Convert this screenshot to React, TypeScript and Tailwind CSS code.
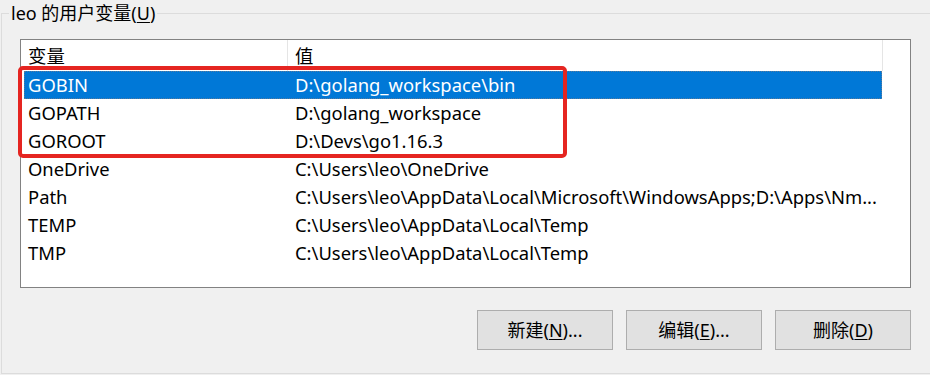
const rows = [
  { name: "GOBIN", value: "D:\\golang_workspace\\bin" },
  { name: "GOPATH", value: "D:\\golang_workspace" },
  { name: "GOROOT", value: "D:\\Devs\\go1.16.3" },
  { name: "OneDrive", value: "C:\\Users\\leo\\OneDrive" },
  { name: "Path", value: "C:\\Users\\leo\\AppData\\Local\\Microsoft\\WindowsApps;D:\\Apps\\Nm..." },
  { name: "TEMP", value: "C:\\Users\\leo\\AppData\\Local\\Temp" },
  { name: "TMP", value: "C:\\Users\\leo\\AppData\\Local\\Temp" },
];

function Btn({ label, hot, rest }: { label: string; hot: string; rest: string }) {
  return (
    <button className="w-[136px] h-[40px] border border-[#adadad] bg-[#e1e1e1] text-[18px] text-black flex items-center justify-center">
      {label}(<span className="underline underline-offset-2">{hot}</span>){rest}
    </button>
  );
}

export default function App() {
  return (
    <div
      className="w-[930px] h-[375px] bg-[#f0f0f0] overflow-hidden relative text-black"
      style={{ fontFamily: '"Noto Sans", "Noto Sans CJK SC", sans-serif' }}
    >
      <div className="relative mt-[13px] ml-[1px] w-[960px] h-[361px] border-l border-t border-b border-[#dcdcdc] pl-[18px] pt-[25px]">
        <div className="absolute left-[7px] top-[-13px] px-[2px] bg-[#f0f0f0] text-[18px] leading-[24px]">
          leo 的用户变量(<span className="underline underline-offset-2">U</span>)
        </div>

        <div className="relative w-[891px] h-[249px] border border-[#828282] bg-white text-[18.4px]">
          <div className="flex h-[31px] items-center">
            <div className="w-[267px] h-full pl-[7px] flex items-center border-r border-[#e5e5e5]">变量</div>
            <div className="w-[595px] h-full pl-[7px] flex items-center border-r border-[#e5e5e5]">值</div>
          </div>
          {rows.map((r, i) => (
            <div
              key={r.name}
              className={`flex h-[28px] items-center ml-[3px] w-[858px] ${
                i === 0 ? "bg-[#0078d7] text-white outline outline-1 outline-dotted outline-[#5a7a9a] -outline-offset-1" : ""
              }`}
            >
              <div className="w-[264px] pl-[4px] whitespace-nowrap">{r.name}</div>
              <div className="w-[594px] pl-[7px] whitespace-nowrap overflow-hidden">{r.value}</div>
            </div>
          ))}

          {/* red annotation box */}
          <div className="absolute left-[-3px] top-[26px] w-[549px] h-[92px] border-4 border-[#e52521] rounded-[5px]" />
        </div>

        <div className="flex justify-start gap-[13px] mt-[22px] ml-[457px]">
          <Btn label="新建" hot="N" rest="..." />
          <Btn label="编辑" hot="E" rest="..." />
          <Btn label="删除" hot="D" rest="" />
        </div>
      </div>
    </div>
  );
}
